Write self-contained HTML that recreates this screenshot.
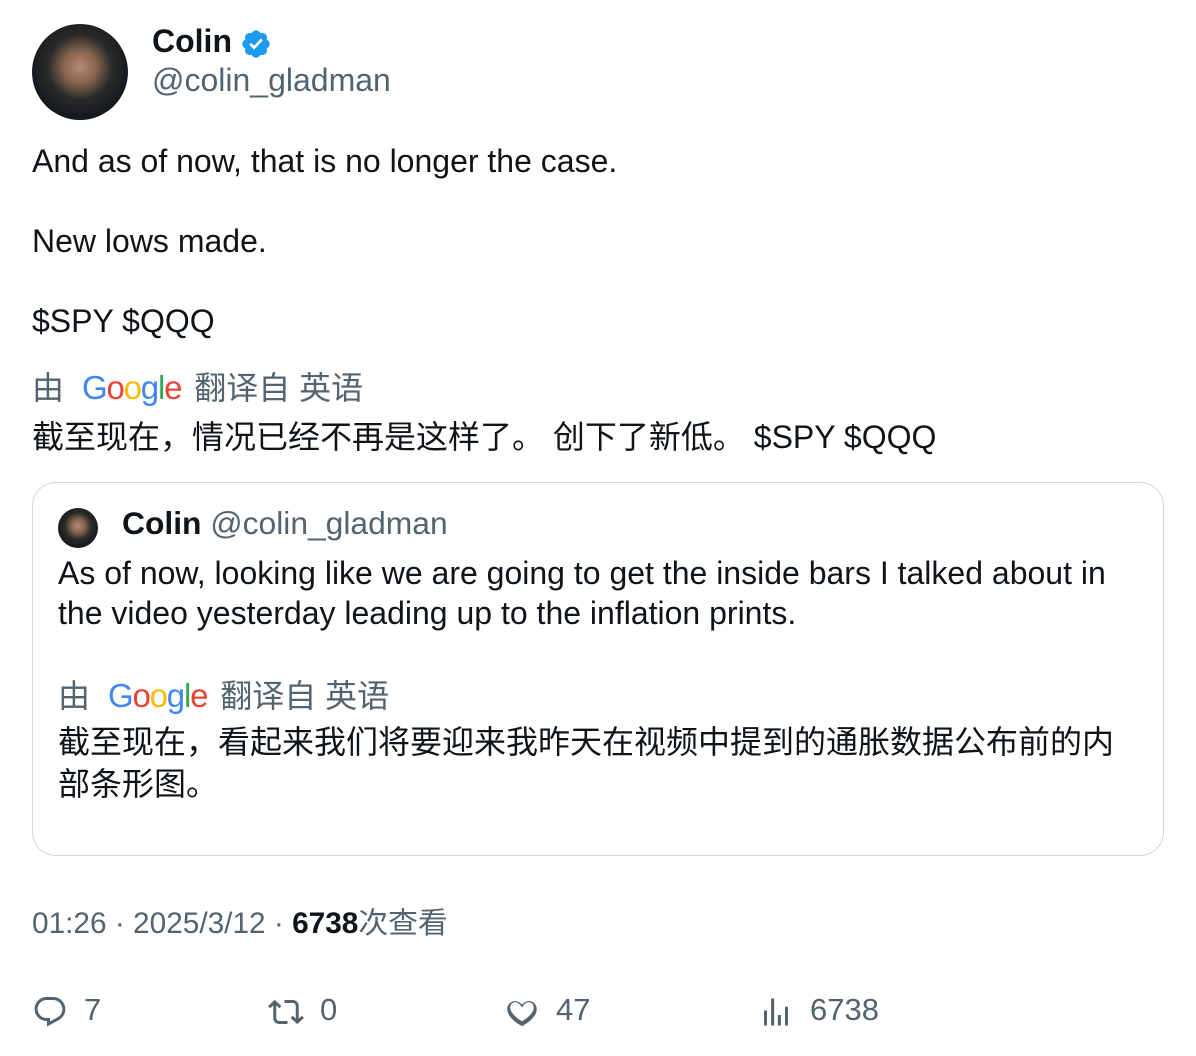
<!DOCTYPE html>
<html><head><meta charset="utf-8"><style>
body{margin:0;background:#fff;font-family:"Liberation Sans","Noto Sans CJK SC",sans-serif;color:#0f1419;width:1196px;height:1056px;overflow:hidden;position:relative}
.a{position:absolute;white-space:nowrap}
.g{color:#536471}
.goo{display:inline-block;margin:0 13px 0 18px;letter-spacing:-1.2px;font-size:33px}
</style></head><body>
<div class="a" style="left:32px;top:24px;width:96px;height:96px;border-radius:50%;background:radial-gradient(circle at 50% 45%,#b58a70 0,#8a6650 22%,#2a2a2a 45%,#15191d 70%)"></div>
<div class="a" style="left:152px;top:23px;font-size:32px;font-weight:bold">Colin</div>
<svg class="a" style="left:240px;top:28px" width="32" height="32" viewBox="0 0 24 24"><path fill="#1d9bf0" d="M22.25 12c0-1.43-.88-2.670-2.19-3.34.46-1.39.2-2.9-.81-3.91s-2.52-1.27-3.910-.81c-.66-1.31-1.91-2.190-3.34-2.19s-2.67.88-3.33 2.19c-1.4-.46-2.91-.2-3.92.81s-1.26 2.52-.8 3.91c-1.31.67-2.2 1.91-2.2 3.34s.89 2.67 2.2 3.34c-.46 1.39-.21 2.9.8 3.91s2.52 1.26 3.91.81c.67 1.31 1.91 2.19 3.34 2.19s2.68-.88 3.34-2.19c1.39.45 2.9.2 3.91-.81s1.27-2.52.81-3.91c1.31-.67 2.19-1.91 2.19-3.34z"/><path fill="#fff" d="M10.54 16.2l-3.6-3.6 1.42-1.42 2.12 2.12 5.2-5.4 1.46 1.37z"/></svg>
<div class="a g" style="left:152px;top:62px;font-size:32px">@colin_gladman</div>
<div class="a" style="left:32px;top:141px;font-size:32px;line-height:40px">And as of now, that is no longer the case.<br><br>New lows made.<br><br>$SPY $QQQ</div>
<div class="a g" style="left:32px;top:363px;font-size:32px">由<span class="goo"><span style="color:#4285f4">G</span><span style="color:#ea4335">o</span><span style="color:#fbbc05">o</span><span style="color:#4285f4">g</span><span style="color:#34a853">l</span><span style="color:#ea4335">e</span></span>翻译自 英语</div>
<div class="a" style="left:32px;top:412px;font-size:32px">截至现在，情况已经不再是这样了。 创下了新低。 $SPY $QQQ</div>
<div class="a" style="left:32px;top:482px;width:1130px;height:372px;border:1px solid #cfd9de;border-radius:24px"></div>
<div class="a" style="left:58px;top:508px;width:40px;height:40px;border-radius:50%;background:radial-gradient(circle at 50% 45%,#b58a70 0,#8a6650 22%,#2a2a2a 45%,#15191d 70%)"></div>
<div class="a" style="left:122px;top:505px;font-size:31.8px"><b>Colin</b> <span class="g">@colin_gladman</span></div>
<div class="a" style="left:58px;top:553px;font-size:32px;line-height:40px">As of now, looking like we are going to get the inside bars I talked about in<br>the video yesterday leading up to the inflation prints.</div>
<div class="a g" style="left:58px;top:671px;font-size:32px">由<span class="goo"><span style="color:#4285f4">G</span><span style="color:#ea4335">o</span><span style="color:#fbbc05">o</span><span style="color:#4285f4">g</span><span style="color:#34a853">l</span><span style="color:#ea4335">e</span></span>翻译自 英语</div>
<div class="a" style="left:58px;top:721px;font-size:32px;line-height:42px">截至现在，看起来我们将要迎来我昨天在视频中提到的通胀数据公布前的内<br>部条形图。</div>
<div class="a g" style="left:32px;top:898px;font-size:29.8px">01:26 · 2025/3/12 · <b style="color:#0f1419">6738</b>次查看</div>
<svg class="a" style="left:32px;top:994px" width="36" height="36" viewBox="0 0 24 24"><path fill="#536471" d="M1.75 10c0-4.420 3.58-8 8-8h4.37c4.5 0 8.13 3.64 8.13 8.13 0 2.96-1.6 5.68-4.19 7.11l-8.06 4.46v-3.69h-.07c-4.49.1-8.18-3.51-8.18-8.010zm8-6c-3.32 0-6 2.69-6 6 0 3.37 2.77 6.08 6.13 6.01l.35-.01h1.77v2.3l5.09-2.81c1.95-1.08 3.16-3.13 3.16-5.36 0-3.39-2.74-6.13-6.13-6.13H9.75z"/></svg>
<div class="a g" style="left:84px;top:992px;font-size:31px">7</div>
<svg class="a" style="left:268px;top:994px" width="36" height="36" viewBox="0 0 24 24"><path fill="#536471" d="M4.5 3.88l4.43 4.14-1.36 1.46L5.5 7.55V16c0 1.1.9 2 2 2H13v2H7.5c-2.21 0-4-1.79-4-4V7.55L1.43 9.48.07 8.02 4.5 3.88zM16.5 6H11V4h5.5c2.21 0 4 1.79 4 4v8.45l2.07-1.93 1.36 1.46-4.43 4.14-4.43-4.14 1.36-1.46 2.07 1.93V8c0-1.1-.9-2-2-2z"/></svg>
<div class="a g" style="left:320px;top:992px;font-size:31px">0</div>
<svg class="a" style="left:504px;top:994px" width="36" height="36" viewBox="0 0 24 24"><path fill="#536471" d="M16.7 5.5c-1.11-.05-2.49.48-3.64 2.02l-1.06 1.42-1.06-1.42C9.79 5.98 8.41 5.45 7.3 5.5c-1.14.06-2.14.71-2.71 1.72-.55 1.01-.69 2.58.31 4.46 1 1.88 3.13 4.13 7.1 6.52 3.970-2.39 6.1-4.64 7.1-6.520 1-1.88.86-3.45.31-4.46-.57-1.01-1.570-1.66-2.71-1.72zm4.16 8.13c-1.25 2.34-3.790 4.87-8.36 7.54l-.5.29-.5-.29c-4.57-2.67-7.11-5.2-8.36-7.54-1.24-2.34-1.25-4.5-.35-6.13C3.7 5.87 5.26 4.83 7.03 4.75c1.77-.08 3.55.76 4.97 2.36 1.42-1.6 3.2-2.44 4.97-2.36 1.77.08 3.33 1.12 4.21 2.75.9 1.63.89 3.79-.32 6.13z"/></svg>
<div class="a g" style="left:556px;top:992px;font-size:31px">47</div>
<svg class="a" style="left:758px;top:994px" width="36" height="36" viewBox="0 0 24 24"><path fill="#536471" d="M8.75 21V3h2v18h-2zM18 21V8.5h2V21h-2zM4 21l.004-10h2L6 21H4zm9.248 0v-7h2v7h-2z"/></svg>
<div class="a g" style="left:810px;top:992px;font-size:31px">6738</div>
</body></html>
